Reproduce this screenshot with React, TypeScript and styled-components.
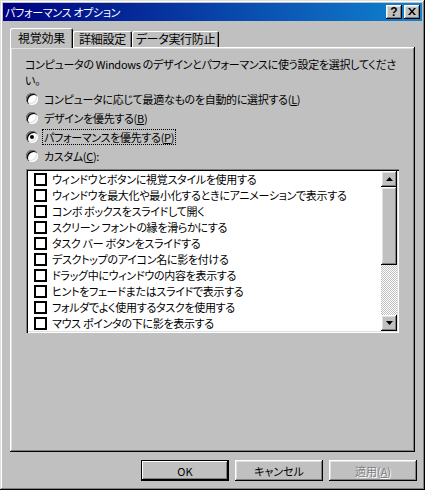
import React from 'react';
import styled, { createGlobalStyle, css } from 'styled-components';

const GlobalStyle = createGlobalStyle`
  html, body {
    margin: 0;
    padding: 0;
    background: #c0c0c0;
  }
  body {
    font-family: "Noto Sans CJK JP", "Liberation Sans", sans-serif;
    font-size: 11px;
    letter-spacing: -0.3px;
    font-feature-settings: "palt" 1;
    color: #000;
  }
`;

const raised = css`
  box-shadow: inset -1px -1px #000, inset 1px 1px #fff, inset -2px -2px #808080, inset 2px 2px #dfdfdf;
`;

const sunken = css`
  box-shadow: inset 1px 1px #808080, inset 2px 2px #000, inset -1px -1px #fff, inset -2px -2px #dfdfdf;
`;

const effects = [
  'ウィンドウとボタンに視覚スタイルを使用する',
  'ウィンドウを最大化や最小化するときにアニメーションで表示する',
  'コンボ ボックスをスライドして開く',
  'スクリーン フォントの縁を滑らかにする',
  'タスク バー ボタンをスライドする',
  'デスクトップのアイコン名に影を付ける',
  'ドラッグ中にウィンドウの内容を表示する',
  'ヒントをフェードまたはスライドで表示する',
  'フォルダでよく使用するタスクを使用する',
  'マウス ポインタの下に影を表示する',
];

const options = [
  { label: 'コンピュータに応じて最適なものを自動的に選択する', key: 'L', suffix: '' },
  { label: 'デザインを優先する', key: 'B', suffix: '' },
  { label: 'パフォーマンスを優先する', key: 'P', suffix: '', checked: true },
  { label: 'カスタム', key: 'C', suffix: ':' },
];

function App() {
  return (
    <>
      <GlobalStyle />
      <Window>
        <TitleBar>
          <TitleText>パフォーマンス オプション</TitleText>
          <TitleButtons>
            <TitleButton>
              <HelpGlyph>?</HelpGlyph>
            </TitleButton>
            <TitleButton>
              <svg width="8" height="7" viewBox="0 0 8 7">
                <path d="M0 0h2l2 2.5L6 0h2L5 3.5 8 7H6L4 4.5 2 7H0l3-3.5z" fill="#000" />
              </svg>
            </TitleButton>
          </TitleButtons>
        </TitleBar>

        <Body>
          <TabStrip>
            <Tab $active $width={63}>視覚効果</Tab>
            <Tab $width={59}>詳細設定</Tab>
            <Tab $width={87}>データ実行防止</Tab>
          </TabStrip>

          <Panel>
            <Description>
              <DescLine>コンピュータの Windows のデザインとパフォーマンスに使う設定を選択してくださ</DescLine>
              <DescLine>い。</DescLine>
            </Description>

            <RadioGroup>
              {options.map((o) => (
                <RadioRow key={o.key}>
                  <RadioCircle $checked={o.checked} />
                  <RadioLabel $focused={o.checked}>
                    {o.label}(<u>{o.key}</u>){o.suffix}
                  </RadioLabel>
                </RadioRow>
              ))}
            </RadioGroup>

            <ListBox>
              <ListRows>
                {effects.map((e) => (
                  <ListRow key={e}>
                    <CheckBox />
                    <RowText>{e}</RowText>
                  </ListRow>
                ))}
              </ListRows>
              <ScrollBar>
                <ScrollButton>
                  <svg width="7" height="4" viewBox="0 0 7 4">
                    <path d="M3.5 0L7 4H0z" fill="#000" />
                  </svg>
                </ScrollButton>
                <Thumb />
                <Track />
                <ScrollButton>
                  <svg width="7" height="4" viewBox="0 0 7 4">
                    <path d="M0 0h7L3.5 4z" fill="#000" />
                  </svg>
                </ScrollButton>
              </ScrollBar>
            </ListBox>
          </Panel>

          <Footer>
            <PushButton $default>OK</PushButton>
            <PushButton>キャンセル</PushButton>
            <PushButton disabled>
              適用(<u>A</u>)
            </PushButton>
          </Footer>
        </Body>
      </Window>
    </>
  );
}

const Window = styled.div`
  width: 425px;
  height: 490px;
  box-sizing: border-box;
  padding: 3px;
  background: #c0c0c0;
  box-shadow: inset -1px -1px #000, inset 1px 1px #dfdfdf, inset -2px -2px #808080, inset 2px 2px #fff;
  display: flex;
  flex-direction: column;
`;

const TitleBar = styled.div`
  height: 18px;
  flex: none;
  display: flex;
  align-items: center;
  justify-content: space-between;
  padding: 0 2px;
  background: linear-gradient(to right, #000080, #1084d0);
`;

const TitleText = styled.div`
  color: #fff;
  font-size: 11px;
  line-height: 18px;
  white-space: nowrap;
`;

const TitleButtons = styled.div`
  display: flex;
  gap: 2px;
`;

const TitleButton = styled.div`
  width: 16px;
  height: 14px;
  box-sizing: border-box;
  background: #c0c0c0;
  ${raised};
  display: flex;
  align-items: center;
  justify-content: center;
  padding-bottom: 1px;
`;

const HelpGlyph = styled.span`
  font-family: "Liberation Sans", sans-serif;
  font-weight: bold;
  font-size: 12px;
  line-height: 12px;
  letter-spacing: 0;
  margin-top: 1px;
`;

const Body = styled.div`
  flex: 1;
  display: flex;
  flex-direction: column;
  padding: 7px 5px 6px 7px;
`;

const TabStrip = styled.div`
  height: 19px;
  flex: none;
  display: flex;
  align-items: flex-end;
`;

const Tab = styled.div<{ $active?: boolean; $width: number }>`
  width: ${(p) => p.$width}px;
  height: ${(p) => (p.$active ? 20 : 16)}px;
  margin-bottom: ${(p) => (p.$active ? -1 : 0)}px;
  position: relative;
  z-index: ${(p) => (p.$active ? 1 : 0)};
  box-sizing: border-box;
  background: #c0c0c0;
  border-radius: 2px 2px 0 0;
  box-shadow: inset 1px 1px #fff, inset -1px 0 #000, inset -2px 0 #808080;
  display: flex;
  align-items: ${(p) => (p.$active ? 'flex-start' : 'center')};
  justify-content: center;
  padding-top: ${(p) => (p.$active ? 2 : 0)}px;
  font-size: 12px;
  line-height: 16px;
  white-space: nowrap;
`;

const Panel = styled.div`
  height: 405px;
  flex: none;
  box-sizing: border-box;
  margin-right: 2px;
  padding: 9px 14px 0 15px;
  background: #c0c0c0;
  ${raised};
  display: flex;
  flex-direction: column;
`;

const Description = styled.div`
  display: flex;
  flex-direction: column;
`;

const DescLine = styled.div`
  height: 16px;
  line-height: 16px;
  white-space: nowrap;
`;

const RadioGroup = styled.div`
  display: flex;
  flex-direction: column;
  margin-top: 1px;
`;

const RadioRow = styled.div`
  height: 19px;
  display: flex;
  align-items: center;
  padding-left: 1px;
`;

const RadioCircle = styled.span<{ $checked?: boolean }>`
  width: 12px;
  height: 12px;
  flex: none;
  border-radius: 50%;
  background: #fff;
  box-shadow: inset 1px 1px 0 #808080, inset 2px 2px 0 #000, inset -1px -1px 0 #fff, inset -2px -2px 0 #dfdfdf;
  display: flex;
  align-items: center;
  justify-content: center;

  &::after {
    content: '';
    width: 4px;
    height: 4px;
    border-radius: 50%;
    background: ${(p) => (p.$checked ? '#000' : 'transparent')};
  }
`;

const RadioLabel = styled.span<{ $focused?: boolean }>`
  margin-left: 5px;
  padding: 0 1px;
  line-height: 14px;
  white-space: nowrap;
  outline: ${(p) => (p.$focused ? '1px dotted #000' : 'none')};
`;

const ListBox = styled.div`
  width: 373px;
  height: 164px;
  box-sizing: border-box;
  margin-top: 4px;
  margin-left: 1px;
  padding: 2px;
  background: #fff;
  ${sunken};
  display: flex;
`;

const ListRows = styled.div`
  flex: 1;
  display: flex;
  flex-direction: column;
  overflow: hidden;
`;

const ListRow = styled.div`
  height: 16px;
  display: flex;
  align-items: center;
  padding-left: 6px;
`;

const CheckBox = styled.span`
  width: 13px;
  height: 13px;
  flex: none;
  box-sizing: border-box;
  border: 2px solid #000;
  background: #fff;
`;

const RowText = styled.span`
  margin-left: 5px;
  white-space: nowrap;
  line-height: 16px;
`;

const ScrollBar = styled.div`
  width: 16px;
  flex: none;
  display: flex;
  flex-direction: column;
`;

const ScrollButton = styled.div`
  height: 16px;
  flex: none;
  box-sizing: border-box;
  background: #c0c0c0;
  ${raised};
  display: flex;
  align-items: center;
  justify-content: center;
`;

const Thumb = styled.div`
  height: 78px;
  flex: none;
  background: #c0c0c0;
  ${raised};
`;

const Track = styled.div`
  flex: 1;
  background: repeating-conic-gradient(#fff 0 25%, #c0c0c0 0 50%) 0 0 / 2px 2px;
`;

const Footer = styled.div`
  display: flex;
  justify-content: flex-end;
  gap: 6px;
  margin-top: 8px;
`;

const PushButton = styled.button<{ $default?: boolean }>`
  width: 88px;
  height: 21px;
  box-sizing: border-box;
  border: none;
  padding: 0;
  background: #c0c0c0;
  font: inherit;
  color: #000;
  ${(p) =>
    p.$default
      ? css`
          box-shadow: inset 0 0 0 1px #000, inset -2px -2px #000, inset 2px 2px #fff, inset -3px -3px #808080;
        `
      : raised};

  &:disabled {
    color: #808080;
    text-shadow: 1px 1px #fff;
  }
`;

export default App;
